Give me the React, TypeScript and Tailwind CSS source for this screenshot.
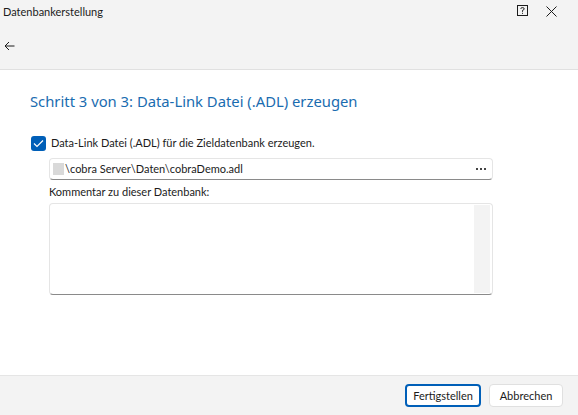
import React from "react";

export default function App() {
  return (
    <div
      className="w-[578px] h-[415px] flex flex-col bg-white text-[#1b1b1b] overflow-hidden"
      style={{ fontFamily: 'Lato, "Noto Sans", sans-serif' }}
    >
      <div className="h-[70px] bg-[#f3f3f3] border-b border-[#e0e0e0] relative shrink-0">
        <div className="absolute left-[3px] top-[4px] text-[11px] leading-[15px]">Datenbankerstellung</div>
        <svg className="absolute left-[517px] top-[5px]" width="11" height="11" viewBox="0 0 11 11">
          <rect x="0.5" y="0.5" width="10" height="10" fill="none" stroke="#1b1b1b" strokeWidth="1" />
          <path d="M3.8 3.8 Q3.8 2.6 5.5 2.6 Q7.2 2.6 7.2 3.9 Q7.2 4.8 5.5 5.4 L5.5 6.8" fill="none" stroke="#1b1b1b" strokeWidth="1" />
          <rect x="5" y="7.8" width="1" height="1" fill="#1b1b1b" />
        </svg>
        <svg className="absolute left-[546px] top-[6px]" width="11" height="11" viewBox="0 0 11 11">
          <path d="M0.5 0.5 L10.5 10.5 M10.5 0.5 L0.5 10.5" stroke="#1b1b1b" strokeWidth="1" />
        </svg>
        <svg className="absolute left-[4px] top-[41px]" width="11" height="10" viewBox="0 0 11 10">
          <path d="M10.5 5 L1 5 M5 1 L1 5 L5 9" fill="none" stroke="#1b1b1b" strokeWidth="1" />
        </svg>
      </div>
      <div className="flex-1 flex flex-col">
        <div
          className="pl-[30px] pt-[21px] text-[14.8px] leading-[20px] text-[#1a6cb0]"
          style={{ fontFamily: '"Noto Sans", sans-serif' }}
        >
          Schritt 3 von 3: Data-Link Datei (.ADL) erzeugen
        </div>
        <div className="flex items-center pl-[31px] mt-[24px] h-[16px]">
          <div className="w-[15px] h-[15px] rounded-[3px] bg-[#005fb8] flex items-center justify-center">
            <svg width="11" height="9" viewBox="0 0 11 9">
              <path d="M1 4.5 L4 7.5 L10 1.5" fill="none" stroke="white" strokeWidth="1.2" />
            </svg>
          </div>
          <span className="ml-[5px] text-[11px] leading-[16px]">Data-Link Datei (.ADL) für die Zieldatenbank erzeugen.</span>
        </div>
        <div className="ml-[49px] w-[444px] mt-[7px] h-[22px] rounded-[4px] border border-[#e5e5e5] border-b-[#8a8a8a] flex items-center pl-[3px] pr-[6px]">
          <div className="w-[11px] h-[12px] bg-[#d9d9d9]" />
          <span className="text-[11px] leading-[16px] ml-[1px]">\cobra Server\Daten\cobraDemo.adl</span>
          <span className="ml-auto flex gap-[2px] items-center">
            <span className="w-[2px] h-[2px] bg-[#444]" />
            <span className="w-[2px] h-[2px] bg-[#444]" />
            <span className="w-[2px] h-[2px] bg-[#444]" />
          </span>
        </div>
        <div className="ml-[49px] mt-[4px] text-[11px] leading-[16px]">Kommentar zu dieser Datenbank:</div>
        <div className="ml-[49px] w-[444px] mt-[3px] h-[92px] rounded-[4px] border border-[#e5e5e5] border-b-[#8a8a8a] flex justify-end p-[1px]">
          <div className="w-[16px] h-full bg-[#f3f3f3] mr-[1px]" />
        </div>
      </div>
      <div className="h-[40px] bg-[#f3f3f3] border-t border-[#e5e5e5] flex items-center justify-end pr-[15px] gap-[8px] shrink-0">
        <button className="w-[76px] h-[23px] rounded-[4px] border-2 border-[#005fb8] bg-white text-[11px] leading-[16px]">
          Fertigstellen
        </button>
        <button className="w-[74px] h-[23px] rounded-[4px] border border-[#e0e0e0] bg-white text-[11px] leading-[16px]">
          Abbrechen
        </button>
      </div>
    </div>
  );
}
